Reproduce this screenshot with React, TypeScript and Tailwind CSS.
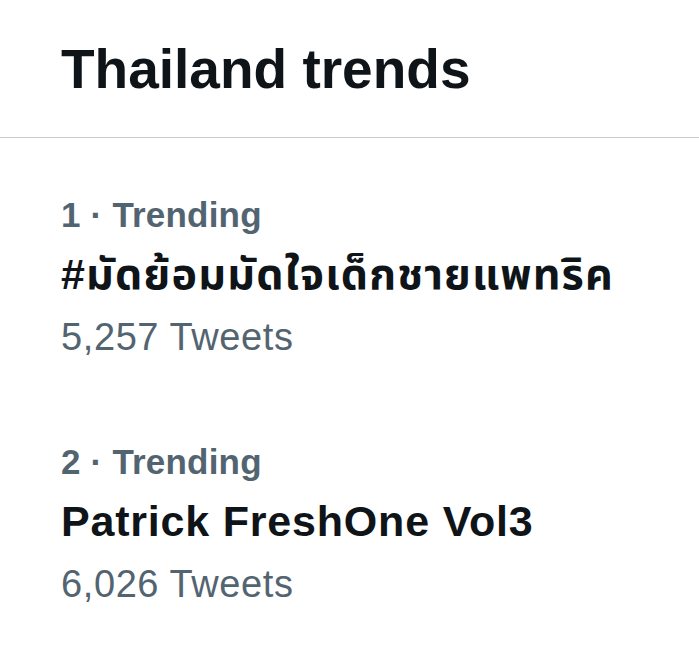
const trends = [
  { rank: 1, name: '#มัดย้อมมัดใจเด็กชายแพทริค', tweets: '5,257', thai: true },
  { rank: 2, name: 'Patrick FreshOne Vol3', tweets: '6,026', thai: false },
]

export default function App() {
  return (
    <div
      className="min-h-screen bg-white"
      style={{ fontFamily: '"Liberation Sans", Arial, sans-serif' }}
    >
      {/* Header */}
      <div className="pl-[61px] pr-[60px] pt-[37px] pb-[36px] border-b border-[#cacdd0]">
        <h1 className="m-0 text-[55px] leading-[64px] font-bold text-[#0f1419] tracking-[0px]">
          Thailand trends
        </h1>
      </div>

      {/* Trend list */}
      <div className="pt-[16px]">
        {trends.map(t => (
          <div key={t.rank} className="pl-[61px] pr-[60px] pt-[40px] pb-[41px] flex flex-col">
            <div className="text-[35px] leading-[42px] font-bold text-[#536471] tracking-[0.2px]">
              {t.rank} · Trending
            </div>
            <div
              className={
                t.thai
                  ? 'mt-[13px] text-[43px] leading-[50px] font-bold text-[#0f1419] tracking-[1.2px] whitespace-nowrap'
                  : 'mt-[13px] text-[43px] leading-[50px] font-bold text-[#0f1419] tracking-[0.8px] whitespace-nowrap'
              }
              style={{ fontFamily: '"Liberation Sans", "Noto Sans Thai", "Noto Sans", "DejaVu Sans", sans-serif' }}
            >
              {t.name}
            </div>
            <div className="mt-[15px] text-[38px] leading-[46px] text-[#536471] tracking-[0.6px]">
              {t.tweets} Tweets
            </div>
          </div>
        ))}
      </div>
    </div>
  )
}
